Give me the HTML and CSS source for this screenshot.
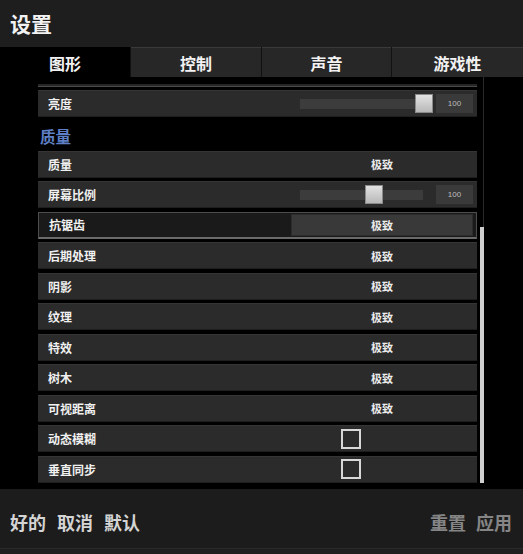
FILE: index.html
```html
<!DOCTYPE html>
<html lang="zh">
<head>
<meta charset="utf-8">
<link rel="stylesheet" href="styles.css">
</head>
<body>
<div class="screen">
  <div class="header"><span class="title">设置</span></div>
  <div class="tabs">
    <div class="tab active">图形</div>
    <div class="tab">控制</div>
    <div class="tab">声音</div>
    <div class="tab">游戏性</div>
  </div>
  <div class="content">
    <div class="list">
      <div class="cut"></div>
      <div class="row first">
        <span class="label">亮度</span>
        <div class="track"><div class="handle h-bright"></div></div>
        <div class="num">100</div>
      </div>
      <div class="section">质量</div>
      <div class="row"><span class="label">质量</span><div class="val">极致</div></div>
      <div class="row">
        <span class="label">屏幕比例</span>
        <div class="track"><div class="handle h-scale"></div></div>
        <div class="num">100</div>
      </div>
      <div class="row selected"><span class="label">抗锯齿</span><div class="val sel">极致</div></div>
      <div class="row"><span class="label">后期处理</span><div class="val">极致</div></div>
      <div class="row"><span class="label">阴影</span><div class="val">极致</div></div>
      <div class="row"><span class="label">纹理</span><div class="val">极致</div></div>
      <div class="row"><span class="label">特效</span><div class="val">极致</div></div>
      <div class="row"><span class="label">树木</span><div class="val">极致</div></div>
      <div class="row"><span class="label">可视距离</span><div class="val">极致</div></div>
      <div class="row"><span class="label">动态模糊</span><div class="val check"><span class="box"></span></div></div>
      <div class="row"><span class="label">垂直同步</span><div class="val check"><span class="box"></span></div></div>
    </div>
    <div class="scroll">
      <div class="rail"></div>
      <div class="thumb"></div>
    </div>
  </div>
  <div class="footer">
    <div class="group left"><span>好的</span><span>取消</span><span>默认</span></div>
    <div class="group right"><span>重置</span><span>应用</span></div>
  </div>
  <div class="strip"></div>
</div>
</body>
</html>
```

FILE: styles.css
```css
* { box-sizing: border-box; }
html, body { margin: 0; padding: 0; background: #000; }
body {
  font-family: "Noto Sans CJK SC", "Noto Sans", sans-serif;
  color: #eee;
}
.screen {
  width: 523px;
  height: 554px;
  overflow: hidden;
  display: flex;
  flex-direction: column;
  background: #000;
}
.header {
  height: 47px;
  background: #1e1e1e;
  display: flex;
  align-items: center;
  padding-left: 10px;
  flex: none;
}
.title {
  font-size: 21px;
  font-weight: 700;
  color: #f2f2f2;
  line-height: 1;
}
.tabs {
  height: 30px;
  display: grid;
  grid-template-columns: 130px 130px 129px 131px;
  column-gap: 1px;
  background: #111;
  flex: none;
}
.tab {
  background: #272727;
  border-top: 1px solid #3a3a3a;
  display: flex;
  align-items: center;
  justify-content: center;
  font-size: 16px;
  font-weight: 700;
  color: #f2f2f2;
}
.tab.active {
  background: #000;
  border-top-color: #000;
}
.content {
  height: 412px;
  display: flex;
  flex: none;
  background: #000;
}
.list {
  width: 439px;
  margin-left: 38px;
  display: flex;
  flex-direction: column;
  gap: 3.5px;
}
.cut {
  margin-top: 7px;
  height: 3px;
  background: #262626;
  border-bottom: 1px solid #4a4a4a;
  flex: none;
}
.row {
  height: 27px;
  flex: none;
  background: #2b2b2b;
  border-top: 1px solid #353535;
  border-bottom: 1px solid #1e1e1e;
  display: flex;
  align-items: center;
  position: relative;
}
.row.first { margin-top: -0.5px; }
.label {
  flex: 1;
  padding-left: 10px;
  font-size: 12px;
  font-weight: 700;
  color: #f0f0f0;
}
.val {
  width: 182px;
  height: 100%;
  margin-right: 4px;
  display: flex;
  align-items: center;
  justify-content: center;
  font-size: 11px;
  font-weight: 700;
  color: #ececec;
}
.val.check {
  justify-content: flex-start;
  padding-left: 50px;
}
.box {
  width: 20px;
  height: 20px;
  border: 2px solid #d8d8d8;
}
.row.selected {
  background: #1a1a1a;
  border: 1px solid #4d4d4d;
  border-bottom: 2px solid #6a6a6a;
}
.val.sel {
  height: 22px;
  margin-right: 3px;
  background: #393939;
  border: 1px solid #2c2c2c;
}
.track {
  width: 123px;
  height: 10px;
  background: #3c3c3c;
  position: relative;
  flex: none;
}
.handle {
  position: absolute;
  top: -5px;
  width: 18px;
  height: 19px;
  background: linear-gradient(#e2e2e2, #b8b8b8);
  border: 1px solid #8a8a8a;
}
.h-bright { left: 115px; }
.h-scale { left: 65px; }
.num {
  width: 37px;
  height: 19px;
  margin-left: 13px;
  margin-right: 4px;
  background: #3a3a3a;
  display: flex;
  align-items: center;
  justify-content: center;
  font-family: "Liberation Sans", sans-serif;
  font-size: 8px;
  color: #bdbdbd;
  flex: none;
}
.section {
  height: 26.5px;
  flex: none;
  padding-left: 2px;
  padding-top: 2px;
  font-size: 15.5px;
  font-weight: 700;
  color: #5f80c6;
  line-height: 26px;
}
.scroll {
  width: 5px;
  margin-left: 3px;
  display: flex;
  flex-direction: column;
}
.rail {
  height: 150px;
  width: 1px;
  margin-left: 3px;
  background: #2a2a2a;
  flex: none;
}
.thumb {
  height: 256px;
  width: 4px;
  background: #cfcfcf;
  flex: none;
}
.footer {
  height: 59px;
  flex: none;
  background: #1c1c1c;
  display: flex;
  justify-content: space-between;
  align-items: center;
  padding: 6px 11px 0 10px;
}
.group {
  display: flex;
  gap: 11px;
  font-size: 18px;
  font-weight: 700;
  line-height: 1;
}
.group.left { color: #d4d4d4; }
.group.right { color: #858585; gap: 10px; }
.strip {
  height: 6px;
  flex: none;
  background: #1f1f1f;
  border-top: 1px solid #2a2a2a;
}
```
